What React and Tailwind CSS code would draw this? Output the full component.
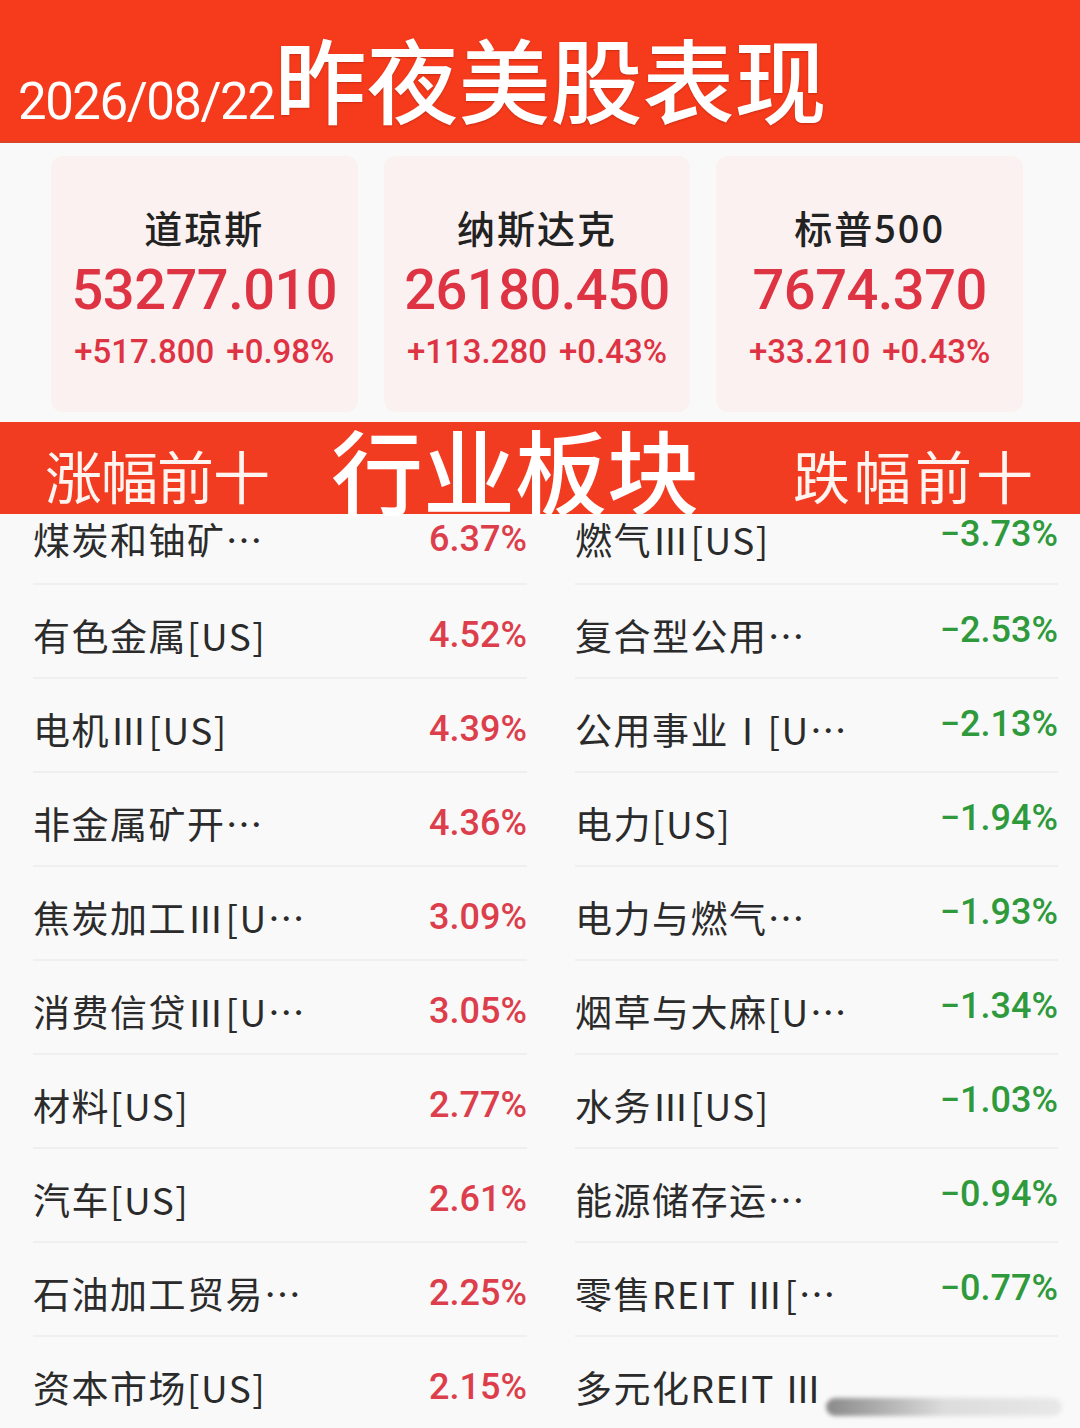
const cards = [
  { name: "道琼斯", value: "53277.010", diff: "+517.800", pct: "+0.98%" },
  { name: "纳斯达克", value: "26180.450", diff: "+113.280", pct: "+0.43%" },
  { name: "标普500", value: "7674.370", diff: "+33.210", pct: "+0.43%" },
];

// 名称末尾的省略号单独成段, 以保持居中点样式
const gainers = [
  ["煤炭和铀矿", true, "6.37%"],
  ["有色金属[US]", false, "4.52%"],
  ["电机Ⅲ[US]", false, "4.39%"],
  ["非金属矿开", true, "4.36%"],
  ["焦炭加工Ⅲ[U", true, "3.09%"],
  ["消费信贷Ⅲ[U", true, "3.05%"],
  ["材料[US]", false, "2.77%"],
  ["汽车[US]", false, "2.61%"],
  ["石油加工贸易", true, "2.25%"],
  ["资本市场[US]", false, "2.15%"],
];

const losers = [
  ["燃气Ⅲ[US]", false, "−3.73%"],
  ["复合型公用", true, "−2.53%"],
  ["公用事业Ⅰ[U", true, "−2.13%"],
  ["电力[US]", false, "−1.94%"],
  ["电力与燃气", true, "−1.93%"],
  ["烟草与大麻[U", true, "−1.34%"],
  ["水务Ⅲ[US]", false, "−1.03%"],
  ["能源储存运", true, "−0.94%"],
  ["零售REIT Ⅲ[", true, "−0.77%"],
  ["多元化REIT Ⅲ", false, null],
];

function Row({ name, more, value, first, up }) {
  return (
    <div
      className={
        "flex items-start justify-between border-b-2 border-[#efefef] " +
        (first ? "h-[71px] pt-[5px]" : "h-[94px] pt-[30px]")
      }
    >
      <span className="text-[37px] leading-[40px] tracking-[1.5px] text-[#2b2b2b] whitespace-nowrap">
        {name}
        {more && (
          <span lang="zh-CN" className="inline-block">
            …
          </span>
        )}
      </span>
      {value && (
        <span
          className={
            "font-['Roboto',sans-serif] font-medium text-[36px] leading-[40px] " +
            (up ? "text-[#dc3e4b]" : "-mt-[5px] text-[#2f9a3c]")
          }
        >
          {value}
        </span>
      )}
    </div>
  );
}

export default function App() {
  return (
    <div
      lang="zh-CN"
      className="relative w-[1080px] h-[1428px] overflow-hidden bg-[#f9f9f9] font-['Noto_Sans_CJK_SC',sans-serif]"
    >
      {/* 顶部标题 */}
      <div className="flex items-end h-[143px] pl-[18px] bg-[#f63a1c] border-b-2 border-[#d9452a]">
        <span className="pb-[14px] font-['Roboto',sans-serif] text-[51px] leading-[50px] tracking-[-1.5px] text-white">
          2026/08/22
        </span>
        <span className="pb-[18px] text-[92px] leading-[92px] font-medium text-white [text-shadow:0_1px_2px_rgba(120,20,0,0.35)]">
          昨夜美股表现
        </span>
      </div>

      {/* 指数卡片 */}
      <div className="flex gap-[26px] pl-[51px] pr-[57px] pt-[13px]">
        {cards.map((c) => (
          <div
            key={c.name}
            className="flex-1 h-[256px] rounded-[12px] bg-[#fbf1f1] flex flex-col items-center"
          >
            <span className="mt-[49px] text-[38px] leading-[44px] tracking-[2px] font-medium text-[#222]">
              {c.name}
            </span>
            <span className="mt-[11px] font-['Roboto',sans-serif] text-[56px] leading-[60px] tracking-[-0.5px] font-medium text-[#dd3343]">
              {c.value}
            </span>
            <span className="mt-[14px] flex gap-[12px] font-['Roboto',sans-serif] font-medium text-[33px] leading-[36px] text-[#dd3343]">
              <span>{c.diff}</span>
              <span>{c.pct}</span>
            </span>
          </div>
        ))}
      </div>

      {/* 行业板块 */}
      <div className="mt-[10px] flex items-center h-[92px] bg-[#f23c22] text-[#fff4ef]">
        <span className="ml-[45px] mt-[12px] text-[57px] leading-[60px] tracking-[-1px]">
          涨幅前十
        </span>
        <span className="ml-[62px] text-[92px] leading-[92px] font-medium text-white">
          行业板块
        </span>
        <span className="ml-auto mr-[43px] mt-[12px] text-[57px] leading-[60px] tracking-[4px]">
          跌幅前十
        </span>
      </div>

      <div className="grid grid-cols-2">
        <div className="pl-[33px] pr-[13px]">
          {gainers.map(([n, m, v], i) => (
            <Row key={n} name={n} more={m} value={v} first={i === 0} up />
          ))}
        </div>
        <div className="pl-[35px] pr-[22px]">
          {losers.map(([n, m, v], i) => (
            <Row key={n} name={n} more={m} value={v} first={i === 0} />
          ))}
        </div>
      </div>

      {/* 底部水印遮挡 */}
      <div className="absolute left-[826px] top-[1398px] w-[236px] h-[18px] rounded-full bg-gradient-to-r from-[#8a8a8a] via-[#dcdcdc] to-[#e8e8e8] blur-[2px]" />
    </div>
  );
}
